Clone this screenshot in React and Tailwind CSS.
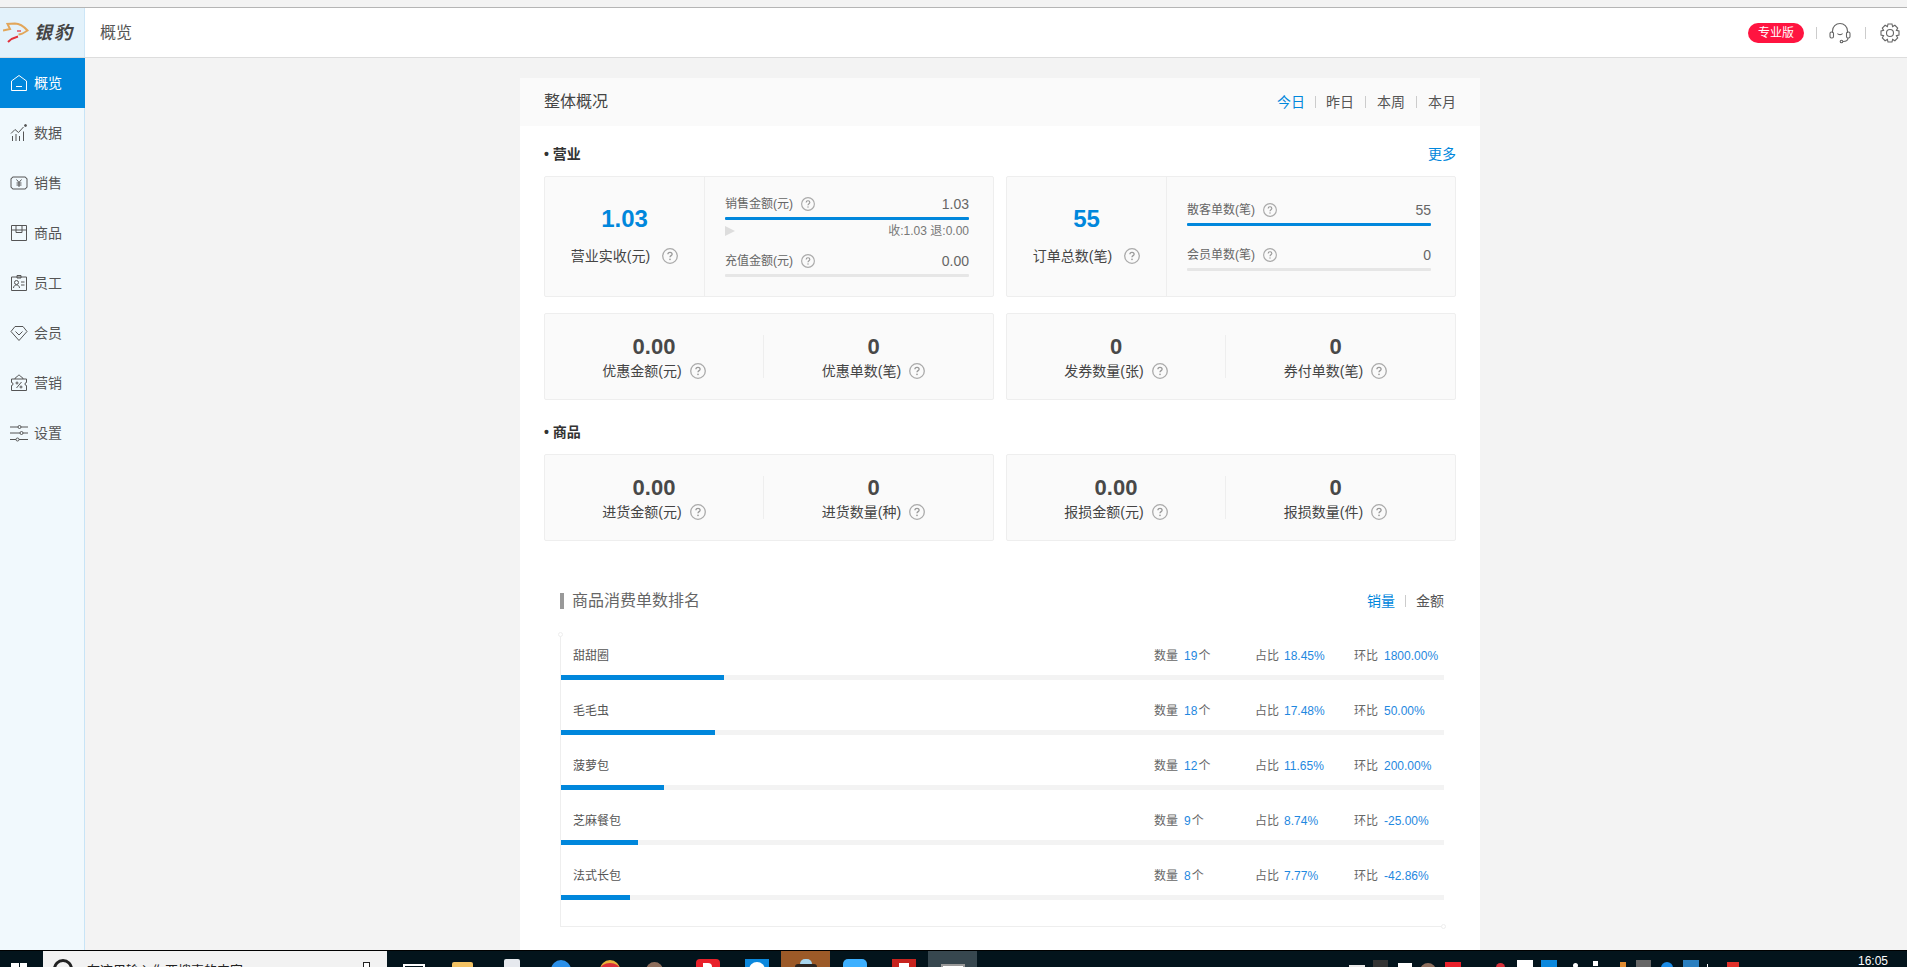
import React from "react";

const menu = [
    { name: "概览", icon: "home", active: true },
    { name: "数据", icon: "chart" },
    { name: "销售", icon: "money" },
    { name: "商品", icon: "box" },
    { name: "员工", icon: "badge" },
    { name: "会员", icon: "gem" },
    { name: "营销", icon: "ticket" },
    { name: "设置", icon: "sliders" },
];

const ranks = [
    { name: "甜甜圈", count: "19", unit: "个", share: 18.45, ratio: "1800.00%" },
    { name: "毛毛虫", count: "18", unit: "个", share: 17.48, ratio: "50.00%" },
    { name: "菠萝包", count: "12", unit: "个", share: 11.65, ratio: "200.00%" },
    { name: "芝麻餐包", count: "9", unit: "个", share: 8.74, ratio: "-25.00%" },
    { name: "法式长包", count: "8", unit: "个", share: 7.77, ratio: "-42.86%" },
];

const MenuIcon = ({ type }) => {
    const common = { width: 18, height: 18, viewBox: "0 0 18 18", fill: "none", stroke: "currentColor", strokeWidth: 1 };
    if (type === "home")
        return (
            <svg {...common}>
                <path d="M1.5 7 9 1.5 16.5 7v9.5h-15z" />
                <path d="M6 12.5h6" />
            </svg>
        );
    if (type === "chart")
        return (
            <svg {...common}>
                <path d="M1 9.5 5 5.5l3.5 3 5-5.5" />
                <path d="M2.500 17v-5M6 17v-7M9.500 17v-5M13.500 17V7.500" />
                <circle cx="15.500" cy="1.500" r="1" fill="currentColor" />
            </svg>
        );
    if (type === "money")
        return (
            <svg {...common}>
                <path d="M2.500 3h13a1.500 1.500 0 0 0 1.500 1.500v9a1.500 1.500 0 0 0-1.500 1.500h-13A1.500 1.500 0 0 0 1 13.500v-9A1.500 1.500 0 0 0 2.500 3z" />
                <path d="m6.500 5.500 2.500 3 2.500-3M9 8.500v4.500M6.500 9h5M6.500 11h5" />
            </svg>
        );
    if (type === "box")
        return (
            <svg {...common}>
                <path d="M1.500 1.500h15v15h-15zM1.500 6h15M6 1.500V8.500h6v-7" />
            </svg>
        );
    if (type === "badge")
        return (
            <svg {...common}>
                <path d="M1.500 3h15v13.500h-15z" />
                <path d="M7 1.500h4V4H7z" />
                <circle cx="6.500" cy="8.500" r="2" />
                <path d="M3.500 14c0-2 1.500-3 3-3s3 1 3 3M11 8h3.500M11 11h3.500" />
            </svg>
        );
    if (type === "gem")
        return (
            <svg {...common}>
                <path d="M5 2.500h8l4 5-8 9-8-9z" />
                <path d="m5.500 7.500 3.500 3.500 3.500-3.500" />
            </svg>
        );
    if (type === "ticket")
        return (
            <svg {...common}>
                <path d="M1.500 5h15v3.500a1.500 1.500 0 0 0 0 3V16.500h-15V11.500a1.500 1.500 0 0 0 0-3z" />
                <path d="M5 5c0-2 2-2 2-2s1-2 2-2 2 2 2 2 2 0 2 2M11.500 8 6.500 14" />
                <circle cx="7" cy="9" r="1" />
                <circle cx="11" cy="13" r="1" />
            </svg>
        );
    return (
        <svg {...common}>
            <path d="M0 3h8M11 3h7M0 9h10M13 9h5M0 15.500h6M9 15.500h9" />
            <circle cx="9.500" cy="3" r="1.500" />
            <circle cx="11.500" cy="9" r="1.500" />
            <circle cx="7.500" cy="15.500" r="1.500" />
        </svg>
    );
};

const Help = ({ size = 16 }) => (
    <svg width={size} height={size} viewBox="0 0 16 16" fill="none" className="shrink-0">
        <circle cx="8" cy="8" r="7.300" stroke="#aaaaaa" strokeWidth="1.300" />
        <path d="M5.900 6.300C5.900 5 6.900 4.300 8 4.300s2.100.7 2.100 1.900c0 1.400-2.100 1.500-2.100 3.100" stroke="#999999" strokeWidth="1.300" />
        <circle cx="8" cy="11.400" r=".8" fill="#999999" />
    </svg>
);

const Bar = ({ filled }) => (
    <div className={`h-[3px] rounded-[1px] ${filled ? "bg-[#0087dc]" : "bg-[#e6e6e6]"}`}></div>
);

const SplitItem = ({ label, value, filled, extra, down }) => (
    <div className={down ? "mb-[20px]" : ""}>
        <div className="flex items-center justify-between h-[19px] mb-[3px]">
            <div className="flex items-center gap-[8px] text-[12px] text-[#666666]">
                <span>{label}</span>
                <Help size={14} />
            </div>
            <span className="text-[14px] text-[#666666]">{value}</span>
        </div>
        <Bar filled={filled} />
        {extra}
    </div>
);

const MainCard = ({ value, label, children }) => (
    <div className="w-[450px] h-[121px] flex border border-[#eeeeee] bg-[#fafafa] rounded-[2px]">
        <div className="w-[160px] shrink-0 border-r border-[#eeeeee] flex flex-col items-center pt-[27px]">
            <div className="text-[24px] leading-[30px] font-bold text-[#0087dc]">{value}</div>
            <div className="flex items-center gap-[12px] mt-[11px] text-[14px] leading-[22px] text-[#444444]">
                <span>{label}</span>
                <Help />
            </div>
        </div>
        <div className="flex-1 pl-[20px] pr-[24px] pb-[2px] flex flex-col justify-center">{children}</div>
    </div>
);

const PairCell = ({ value, label, border }) => (
    <div className={`w-[219px] h-[43px] flex flex-col items-center justify-center pt-[2px] ${border ? "border-r border-[#eeeeee]" : ""}`}>
        <div className="text-[22px] leading-[26px] font-bold text-[#484848]">{value}</div>
        <div className="flex items-center gap-[8px] text-[14px] leading-[22px] text-[#444444]">
            <span>{label}</span>
            <Help />
        </div>
    </div>
);

const PairCard = ({ left, right }) => (
    <div className="w-[450px] h-[87px] flex items-center border border-[#eeeeee] bg-[#fafafa] rounded-[2px]">
        <PairCell {...left} border />
        <PairCell {...right} />
    </div>
);

// the separators in the original are not evenly spaced
const sepMargins = ["", "ml-[10px] mr-[10px]", "ml-[11px] mr-[11px]", "ml-[11px] mr-[11px]"];

const Tabs = ({ items }) => (
    <div className="flex items-center text-[14px] text-[#555555]">
        {items.map((t, i) => (
            <React.Fragment key={t}>
                {i > 0 && <span className={`w-px h-[12px] bg-[#cccccc] ${sepMargins[i]}`}></span>}
                <span className={i === 0 ? "text-[#0087dc]" : ""}>{t}</span>
            </React.Fragment>
        ))}
    </div>
);

const RankRow = ({ row }) => (
    <div className="h-[55px] pt-[9px]">
        <div className="h-[18px] flex items-center text-[12px] pl-[12px]">
            <span className="flex-1 text-[#555555]">{row.name}</span>
            <span className="w-[101px] text-[#666666]">数量<span className="text-[#1f88e0] ml-[6px]">{row.count}</span><span className="text-[#666666] ml-[1px]">{row.unit}</span></span>
            <span className="w-[99px] text-[#666666]">占比<span className="text-[#1f88e0] ml-[5px]">{row.share}%</span></span>
            <span className="w-[90px] text-[#666666]">环比<span className="text-[#1f88e0] ml-[6px]">{row.ratio}</span></span>
        </div>
        <div className="h-[5px] mt-[10px] bg-[#f3f3f3]">
            <div className="h-full bg-[#0087dc]" style={{ width: `${row.share}%` }}></div>
        </div>
    </div>
);

const Slot = ({ top, children, className = "" }) => (
    <div className={`w-[49px] h-full flex justify-center ${className}`} style={{ paddingTop: top }}>
        {children}
    </div>
);

const Taskbar = () => (
    <div className="h-[17px] shrink-0 flex bg-[#03141c] border-t border-[#000000] overflow-hidden relative">
        {/* start */}
        <div className="w-[43px] shrink-0 flex pl-[11px] pt-[12px]">
            <div className="grid grid-cols-2 gap-px w-[16px] h-[16px]">
                <div className="bg-white"></div>
                <div className="bg-white"></div>
                <div className="bg-white"></div>
                <div className="bg-white"></div>
            </div>
        </div>
        {/* search box */}
        <div className="w-[344px] shrink-0 bg-[#f2f2f2] flex pl-[10px] pr-[17px] pt-[8px] text-[13px] text-[#222222]">
            <div className="w-[20px] h-[20px] rounded-full border-[3px] border-[#222222] shrink-0"></div>
            <span className="ml-[14px] mt-[4px] leading-[16px] flex-1">在这里输入你要搜索的内容</span>
            <div className="w-[7px] h-[12px] mt-[3px] border border-[#222222] bg-white"></div>
        </div>
        {/* pinned apps */}
        <div className="flex h-full ml-[2px]">
            <Slot top={13}><div className="w-[22px] h-[12px] border-2 border-white"></div></Slot>
            <Slot top={11}><div className="w-[21px] h-[16px] bg-[#f2c263] rounded-t-[2px]"></div></Slot>
            <Slot top={8}><div className="w-[16px] h-[18px] bg-[#e6e9ee] rounded-t-[2px]"></div></Slot>
            <Slot top={9}><div className="w-[20px] h-[20px] rounded-full bg-[#2a8fe8]"></div></Slot>
            <Slot top={9}><div className="w-[20px] h-[20px] rounded-full bg-[#d9303a] border-t-[3px] border-[#e8b23a]"></div></Slot>
            <Slot top={11}><div className="w-[17px] h-[17px] rounded-full bg-[#8d6e5c] -translate-x-[4px]"></div></Slot>
            <Slot top={8}>
                <div className="w-[24px] h-[20px] rounded-[4px] bg-[#e8202a] flex justify-center pt-[4px]">
                    <div className="w-[9px] h-[8px] bg-white rounded-tr-[4px]"></div>
                </div>
            </Slot>
            <Slot top={8}>
                <div className="w-[24px] h-[20px] bg-[#0b88dd] flex justify-center pt-[3px]">
                    <div className="w-[16px] h-[16px] rounded-full bg-white"></div>
                </div>
            </Slot>
            <Slot top={8} className="bg-[#9c5a28]">
                <div className="flex flex-col items-center">
                    <div className="w-[12px] h-[6px] rounded-t-full bg-[#a9d6ee]"></div>
                    <div className="w-[22px] h-[4px] rounded-t-full bg-[#2a2420]"></div>
                </div>
            </Slot>
            <Slot top={8}><div className="w-[24px] h-[20px] rounded-[5px] bg-[#3db0ff]"></div></Slot>
            <Slot top={8}>
                <div className="w-[24px] h-[20px] bg-[#c7231e] flex justify-center pt-[4px]">
                    <div className="w-[10px] h-[8px] bg-white"></div>
                </div>
            </Slot>
            <Slot top={13} className="bg-[#37474f]"><div className="w-[24px] h-[14px] bg-white border-2 border-[#999999]"></div></Slot>
        </div>
        {/* tray */}
        <div className="flex items-start pl-[372px] pt-[9px] gap-[8px]">
            <div className="w-[16px] h-[14px] mt-[5px] bg-[#e8e8e8]"></div>
            <div className="w-[15px] h-[14px] bg-[#333333]"></div>
            <div className="w-[14px] h-[14px] mt-[3px] ml-[2px] bg-white"></div>
            <div className="w-[16px] h-[16px] mt-[3px] rounded-full bg-[#8d6e5c]"></div>
            <div className="w-[16px] h-[14px] mt-[2px] ml-px bg-[#e8202a]"></div>
            <div className="w-[9px] h-[9px] mt-[3px] ml-[27px] rounded-full bg-[#d9303a]"></div>
            <div className="w-[16px] h-[14px] ml-[4px] bg-white"></div>
            <div className="w-[16px] h-[14px] bg-[#0b88dd]"></div>
            <div className="w-[5px] h-[5px] mt-[3px] ml-[8px] rounded-full bg-white"></div>
            <div className="w-[5px] h-[5px] mt-[1px] ml-[7px] bg-white"></div>
            <div className="w-[6px] h-[8px] mt-[2px] ml-[14px] bg-[#e08a30]"></div>
            <div className="w-[15px] h-[14px] ml-[2px] bg-[#666666]"></div>
            <div className="w-[12px] h-[12px] mt-[2px] ml-[2px] rounded-full bg-[#1a8ce8]"></div>
            <div className="w-[16px] h-[14px] ml-[2px] bg-[#2a7fc0]"></div>
            <div className="w-[8px] h-[4px] mt-[4px] border-l border-white"></div>
            <div className="w-[12px] h-[13px] mt-[2px] ml-[4px] bg-[#e0302a]"></div>
        </div>
        <span className="absolute right-[19px] top-[3px] text-[12px] leading-[14px] text-white">16:05</span>
    </div>
);

export default function App() {
    return (
        <div className="w-[1907px] h-[967px] overflow-hidden flex flex-col bg-[#f3f3f3] font-['Liberation_Sans','Noto_Sans_CJK_SC',sans-serif]">
            {/* browser edge */}
            <div className="h-[8px] shrink-0 border-b border-[#b5b5b5]"></div>

            {/* top bar */}
            <header className="h-[50px] shrink-0 flex items-center bg-white border-b border-[#dddddd]">
                <div className="w-[85px] h-full shrink-0 bg-[#e3f2fb] border-r border-[#cde6f7] flex items-center pl-[3px] gap-[5px]">
                    <svg width="26" height="22" viewBox="0 0 26 22" fill="none">
                        <path d="M0 8.500 7 7 4.500 2 12 1.500c4 0 8 2 12.500 7-3 2-6 4-9 4" stroke="#e2a65a" strokeWidth="2" />
                        <path d="M14 9h4" stroke="#e2384a" strokeWidth="1.300" />
                        <path d="M5 20c3-3 6-4.500 10-5.500" stroke="#e2303a" strokeWidth="2" />
                    </svg>
                    <span className="text-[18px] leading-none font-bold italic text-[#444444] tracking-[2px]">银豹</span>
                </div>
                <h1 className="ml-[15px] text-[16px] font-normal text-[#555555]">概览</h1>
                <div className="ml-auto flex items-center pr-[7px]">
                    <span className="w-[56px] h-[20px] rounded-full bg-[#ff1440] text-white text-[12px] leading-[20px] text-center">专业版</span>
                    <span className="w-px h-[12px] bg-[#cccccc] ml-[12px] mr-[12px]"></span>
                    <svg width="22" height="22" viewBox="0 0 22 22" fill="none" stroke="#666666" strokeWidth="1.100">
                        <path d="M3.500 11V9a7.500 7.500 0 0 1 15 0v2" />
                        <rect x="1" y="10" width="3.500" height="6" rx="1.500" />
                        <rect x="17.500" y="10" width="3.500" height="6" rx="1.500" />
                        <path d="M19 16c0 2.500-2 3.500-5 3.500" />
                        <circle cx="12.500" cy="19.500" r="1.300" />
                        <path d="M8.500 11.500c.8 1.500 4.200 1.500 5 0" />
                    </svg>
                    <span className="w-px h-[12px] bg-[#cccccc] ml-[14px] mr-[14px]"></span>
                    <svg width="20" height="20" viewBox="0 0 20 20" fill="none" stroke="#666666" strokeWidth="1.100">
                        <path d="M8 1h4l.6 2.600 2.300-1.300 2.800 2.800-1.300 2.300L19 8v4l-2.600.6 1.300 2.300-2.800 2.800-2.300-1.300L12 19H8l-.6-2.600-2.300 1.300-2.800-2.800 1.300-2.300L1 12V8l2.600-.6-1.300-2.300 2.800-2.800 2.300 1.300z" />
                        <circle cx="10" cy="10" r="3.500" />
                    </svg>
                </div>
            </header>

            <div className="flex-1 min-h-0 flex">
                {/* side menu */}
                <aside className="w-[85px] shrink-0 bg-[#f1f9fd] border-r border-[#c8e4f6]">
                    {menu.map((m) => (
                        <div
                            key={m.name}
                            className={`h-[50px] flex items-center pl-[10px] gap-[6px] text-[14px] ${m.active ? "w-[85px] bg-[#0087dc] text-white" : "text-[#555555]"}`}
                        >
                            <MenuIcon type={m.icon} />
                            <span>{m.name}</span>
                        </div>
                    ))}
                </aside>

                {/* page */}
                <main className="flex-1 min-w-0 flex justify-center pt-[20px] pl-[8px] overflow-hidden">
                    <div className="w-[960px] h-fit min-h-[900px] bg-white shrink-0">
                        <div className="h-[48px] bg-[#fafafa] flex items-center justify-between px-[24px]">
                            <h2 className="text-[16px] font-normal text-[#444444]">整体概况</h2>
                            <Tabs items={["今日", "昨日", "本周", "本月"]} />
                        </div>

                        <div className="px-[24px]">
                            <div className="h-[50px] flex items-center justify-between pt-[7px] pb-[0px]">
                                <h3 className="text-[14px] font-bold text-[#333333]">• 营业</h3>
                                <span className="text-[14px] text-[#0087dc]">更多</span>
                            </div>
                            <div className="flex justify-between">
                                <MainCard value="1.03" label="营业实收(元)">
                                    <SplitItem
                                        label="销售金额(元)"
                                        value="1.03"
                                        filled
                                        extra={
                                            <div className="h-[22px] flex items-center justify-between text-[12px] text-[#777777] mb-[10px]">
                                                <svg width="10" height="10" viewBox="0 0 10 10">
                                                    <path d="M0 0l10 5-10 5z" fill="#dddddd" />
                                                </svg>
                                                <span>收:1.03 退:0.00</span>
                                            </div>
                                        }
                                    />
                                    <SplitItem label="充值金额(元)" value="0.00" />
                                </MainCard>
                                <MainCard value="55" label="订单总数(笔)">
                                    <SplitItem label="散客单数(笔)" value="55" filled down />
                                    <SplitItem label="会员单数(笔)" value="0" />
                                </MainCard>
                            </div>
                            <div className="flex justify-between mt-[16px]">
                                <PairCard left={{ value: "0.00", label: "优惠金额(元)" }} right={{ value: "0", label: "优惠单数(笔)" }} />
                                <PairCard left={{ value: "0", label: "发券数量(张)" }} right={{ value: "0", label: "券付单数(笔)" }} />
                            </div>

                            <h3 className="h-[54px] pt-[20px] text-[14px] leading-[24px] font-bold text-[#333333]">• 商品</h3>
                            <div className="flex justify-between">
                                <PairCard left={{ value: "0.00", label: "进货金额(元)" }} right={{ value: "0", label: "进货数量(种)" }} />
                                <PairCard left={{ value: "0.00", label: "报损金额(元)" }} right={{ value: "0", label: "报损数量(件)" }} />
                            </div>

                            {/* ranking */}
                            <div className="mt-[52px] pl-[16px] pr-[12px]">
                                <div className="flex items-center justify-between h-[16px]">
                                    <h4 className="border-l-[4px] border-[#999999] pl-[8px] text-[16px] leading-[16px] font-normal text-[#666666]">商品消费单数排名</h4>
                                    <Tabs items={["销量", "金额"]} />
                                </div>
                                <div className="relative mt-[24px] h-[294px] border-l border-b border-[#eeeeee] pt-[5px]">
                                    <span className="absolute -left-[3px] -top-[1px] w-[5px] h-[5px] rounded-full border border-[#eeeeee] bg-white"></span>
                                    <span className="absolute -right-[2px] -bottom-[3px] w-[5px] h-[5px] rounded-full border border-[#eeeeee] bg-white"></span>
                                    {ranks.map((r) => (
                                        <RankRow key={r.name} row={r} />
                                    ))}
                                </div>
                            </div>
                        </div>
                    </div>
                </main>
            </div>

            <Taskbar />
        </div>
    );
}
